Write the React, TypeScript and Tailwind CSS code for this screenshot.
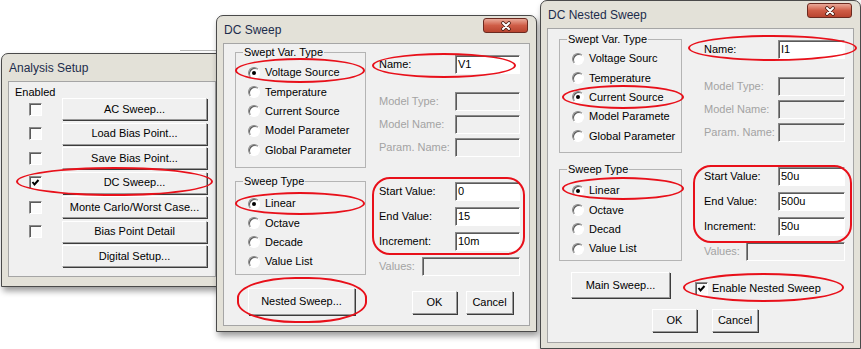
import React from 'react';

const VAR_TYPES_DC = ['Voltage Source', 'Temperature', 'Current Source', 'Model Parameter', 'Global Parameter'];
const VAR_TYPES_NESTED = ['Voltage Sourc', 'Temperature', 'Current Source', 'Model Paramete', 'Global Parameter'];
const SWEEP_TYPES_DC = ['Linear', 'Octave', 'Decade', 'Value List'];
const SWEEP_TYPES_NESTED = ['Linear', 'Octave', 'Decad', 'Value List'];

const ANALYSES = [
  { label: 'AC Sweep...', box: true, checked: false },
  { label: 'Load Bias Point...', box: true, checked: false },
  { label: 'Save Bias Point...', box: true, checked: false },
  { label: 'DC Sweep...', box: true, checked: true },
  { label: 'Monte Carlo/Worst Case...', box: true, checked: false },
  { label: 'Bias Point Detail', box: true, checked: false },
  { label: 'Digital Setup...', box: false, checked: false },
];

function CloseButton() {
  return (
    <div className="mt-[2px] mr-[2px] ml-auto flex h-[15px] w-[45px] items-center justify-center self-start rounded-[3px] border border-[#6b2a20] bg-linear-to-b from-[#e9a999] via-[#cf5d47] to-[#b9442f]">
      <svg width="12" height="10" viewBox="0 0 12 10">
        <path d="M3 2 L9 8 M9 2 L3 8" stroke="#4a1d14" strokeWidth="3.6" strokeLinecap="round" />
        <path d="M3 2 L9 8 M9 2 L3 8" stroke="#ffffff" strokeWidth="2" strokeLinecap="round" />
      </svg>
    </div>
  );
}

function Window({
  title,
  className,
  close = true,
  children,
}: {
  title: string;
  className: string;
  close?: boolean;
  children: React.ReactNode;
}) {
  return (
    <div
      className={`absolute flex flex-col rounded-t-[7px] border border-[#4a4a4a] bg-[#e3e1d8] px-[6px] shadow-[2px_4px_6px_rgba(0,0,0,0.4)] ${className}`}
    >
      <div className="flex h-[27px] shrink-0 items-center">
        <span className="pl-[1px] text-[12px] text-[#1c2c4c]">{title}</span>
        {close && <CloseButton />}
      </div>
      <div className="relative flex-1 border border-[#a5a5a5] bg-[#f0f0f0]">{children}</div>
    </div>
  );
}

function Btn({ label, className }: { label: string; className: string }) {
  return (
    <div
      className={`flex shrink-0 items-center justify-center border border-t-white border-l-white border-b-[#9a9a9a] border-r-[#9a9a9a] bg-[#f0f0f0] text-[11px] text-black shadow-[1px_1px_0_#3c3c3c] ${className}`}
    >
      {label}
    </div>
  );
}

function Check({ checked }: { checked?: boolean }) {
  return (
    <div className="flex h-[13px] w-[13px] shrink-0 items-center justify-center border border-t-[#8a8a8a] border-l-[#8a8a8a] border-b-white border-r-white bg-[#fbfbfb] shadow-[inset_1px_1px_0_#5a5a5a]">
      {checked && (
        <svg width="9" height="9" viewBox="0 0 9 9">
          <polyline points="1.5,4 3.5,6.5 7.5,2" fill="none" stroke="#000" strokeWidth="2" />
        </svg>
      )}
    </div>
  );
}

function Radio({ on }: { on?: boolean }) {
  return (
    <div className="flex h-[12px] w-[12px] shrink-0 items-center justify-center rounded-full border border-t-[#8a8a8a] border-l-[#8a8a8a] border-b-white border-r-white bg-white shadow-[inset_1px_1px_0_#5a5a5a]">
      {on && <div className="h-[4px] w-[4px] rounded-full bg-black" />}
    </div>
  );
}

function Input({ value, disabled, className }: { value?: string; disabled?: boolean; className: string }) {
  return (
    <div
      className={`flex h-[19px] shrink-0 items-center border border-t-[#8a8a8a] border-l-[#8a8a8a] border-b-white border-r-white pl-[2px] text-[11px] text-black shadow-[inset_1px_1px_0_#5a5a5a] ${
        disabled ? 'bg-[#f0f0f0]' : 'bg-white'
      } ${className}`}
    >
      {value}
    </div>
  );
}

function Field({
  label,
  value,
  disabled,
  labelCls,
  inputCls,
  className = '',
}: {
  label: string;
  value?: string;
  disabled?: boolean;
  labelCls: string;
  inputCls: string;
  className?: string;
}) {
  return (
    <div className={`flex h-[19px] items-center ${className}`}>
      <span className={`shrink-0 text-[11px] ${disabled ? 'text-[#a3a3a3]' : 'text-black'} ${labelCls}`}>{label}</span>
      <Input value={value} disabled={disabled} className={inputCls} />
    </div>
  );
}

function Group({
  title,
  items,
  selected,
  className,
  listCls = 'pt-[3px]',
}: {
  title: string;
  items: string[];
  selected: number;
  className: string;
  listCls?: string;
}) {
  return (
    <fieldset className={`shrink-0 border border-[#b4b4b4] ${className}`}>
      <legend className="ml-[7px] px-[1px] text-[11px] leading-[13px] text-black">{title}</legend>
      <div className={`flex flex-col pl-[12px] ${listCls}`}>
        {items.map((t, i) => (
          <div key={t} className="flex h-[19.3px] items-center gap-[5px]">
            <Radio on={i === selected} />
            <span className="whitespace-nowrap text-[11px] text-black">{t}</span>
          </div>
        ))}
      </div>
    </fieldset>
  );
}

function Fields({
  name,
  start,
  end,
  inc,
  labelCls,
  inputCls,
  valuesLabelCls,
  valuesInputCls,
}: {
  name: string;
  start: string;
  end: string;
  inc: string;
  labelCls: string;
  inputCls: string;
  valuesLabelCls: string;
  valuesInputCls: string;
}) {
  return (
    <>
      <Field className="mt-[11px]" label="Name:" value={name} labelCls={labelCls} inputCls={inputCls} />
      <Field className="mt-[18px]" label="Model Type:" disabled labelCls={labelCls} inputCls={inputCls} />
      <Field className="mt-[4px]" label="Model Name:" disabled labelCls={labelCls} inputCls={inputCls} />
      <Field className="mt-[4px]" label="Param. Name:" disabled labelCls={labelCls} inputCls={inputCls} />
      <Field className="mt-[25px]" label="Start Value:" value={start} labelCls={labelCls} inputCls={inputCls} />
      <Field className="mt-[6px]" label="End Value:" value={end} labelCls={labelCls} inputCls={inputCls} />
      <Field className="mt-[6px]" label="Increment:" value={inc} labelCls={labelCls} inputCls={inputCls} />
      <Field className="mt-[6px]" label="Values:" disabled labelCls={valuesLabelCls} inputCls={valuesInputCls} />
    </>
  );
}

function Mark({ className }: { className: string }) {
  return <div className={`pointer-events-none absolute border-2 border-[#e8101a] ${className}`} />;
}

export default function App() {
  return (
    <div className="relative h-[349px] w-[861px] overflow-hidden bg-white font-['Liberation_Sans',Arial,sans-serif]">
      {/* schematic wire peeking out behind the dialogs */}
      <div className="absolute top-[50px] left-[180px] h-px w-[40px] bg-[#b8b8b8]" />

      {/* Analysis Setup */}
      <Window title="Analysis Setup" close={false} className="top-[53px] left-[1px] h-[234px] w-[222px] pb-[9px]">
        <div className="flex flex-col pt-[5px] pl-[6px]">
          <span className="h-[11px] text-[11px] leading-[11px] text-black">Enabled</span>
          <div className="flex flex-col gap-[2.5px]">
            {ANALYSES.map((a) => (
              <div key={a.label} className="flex h-[22px] items-center">
                <div className="flex w-[47px] shrink-0 pl-[14px]">{a.box && <Check checked={a.checked} />}</div>
                <Btn label={a.label} className="h-[22px] w-[145px]" />
              </div>
            ))}
          </div>
        </div>
      </Window>

      {/* DC Sweep */}
      <Window title="DC Sweep" className="top-[15px] left-[216px] h-[317px] w-[321px] pb-[5px]">
        <div className="flex items-start pl-[11px]">
          <div className="flex w-[131px] shrink-0 flex-col pt-[2px]">
            <Group title="Swept Var. Type" items={VAR_TYPES_DC} selected={0} className="h-[122px]" listCls="pt-[4px]" />
            <Group title="Sweep Type" items={SWEEP_TYPES_DC} selected={0} className="mt-[7px] h-[100px]" listCls="pt-[6px]" />
            <Btn label="Nested Sweep..." className="mt-[13px] ml-[13px] h-[27px] w-[107px]" />
          </div>
          <div className="ml-[13px] flex flex-col">
            <Fields
              name="V1"
              start="0"
              end="15"
              inc="10m"
              labelCls="w-[76px]"
              inputCls="w-[65px]"
              valuesLabelCls="w-[43px]"
              valuesInputCls="w-[98px]"
            />
            <div className="mt-[15px] ml-[33px] flex gap-[9px]">
              <Btn label="OK" className="h-[23px] w-[45px]" />
              <Btn label="Cancel" className="h-[23px] w-[47px]" />
            </div>
          </div>
        </div>
      </Window>

      {/* DC Nested Sweep */}
      <Window title="DC Nested Sweep" className="top-0 left-[540px] h-[349px] w-[321px] pb-[5px]">
        <div className="flex items-start pl-[11px]">
          <div className="flex w-[123px] shrink-0 flex-col pt-[4px]">
            <Group title="Swept Var. Type" items={VAR_TYPES_NESTED} selected={2} className="h-[120px]" />
            <Group title="Sweep Type" items={SWEEP_TYPES_NESTED} selected={0} className="mt-[10px] h-[98px]" listCls="pt-[5px]" />
            <Btn label="Main Sweep..." className="mt-[11px] ml-[12px] h-[26px] w-[99px]" />
          </div>
          <div className="ml-[22px] flex flex-col">
            <Fields
              name="I1"
              start="50u"
              end="500u"
              inc="50u"
              labelCls="w-[74px]"
              inputCls="w-[67px]"
              valuesLabelCls="w-[42px]"
              valuesInputCls="w-[99px]"
            />
            <div className="mt-[18px] -ml-[9px] flex h-[19px] items-center gap-[4px]">
              <Check checked />
              <span className="text-[11px] text-black">Enable Nested Sweep</span>
            </div>
          </div>
        </div>
        <div className="mt-[11px] flex gap-[15px] pl-[104px]">
          <Btn label="OK" className="h-[23px] w-[45px]" />
          <Btn label="Cancel" className="h-[23px] w-[46px]" />
        </div>
      </Window>

      {/* red annotation marks */}
      <Mark className="top-[167px] left-[16px] h-[29px] w-[197px] rounded-[50%]" />
      <Mark className="top-[58px] left-[235px] h-[25px] w-[130px] rounded-[50%]" />
      <Mark className="top-[53px] left-[372px] h-[25px] w-[144px] rounded-[50%]" />
      <Mark className="top-[192px] left-[235px] h-[23px] w-[130px] rounded-[50%]" />
      <Mark className="top-[177px] left-[372px] h-[78px] w-[153px] rounded-[18px]" />
      <Mark className="top-[277px] left-[237px] h-[46px] w-[130px] rounded-[45%]" />
      <Mark className="top-[35px] left-[688px] h-[26px] w-[169px] rounded-[50%]" />
      <Mark className="top-[85px] left-[562px] h-[24px] w-[122px] rounded-[50%]" />
      <Mark className="top-[177px] left-[562px] h-[23px] w-[122px] rounded-[50%]" />
      <Mark className="top-[165px] left-[693px] h-[78px] w-[159px] rounded-[18px]" />
      <Mark className="top-[273px] left-[683px] h-[29px] w-[161px] rounded-[50%]" />
    </div>
  );
}
